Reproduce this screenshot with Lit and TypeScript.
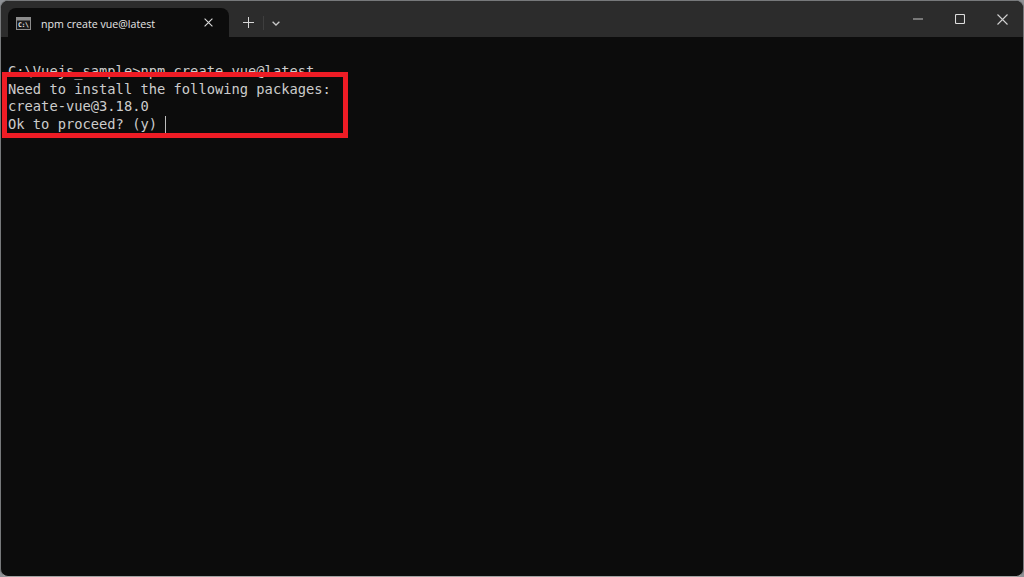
import { LitElement, html, css } from "lit";
import { customElement } from "lit/decorators.js";

@customElement("app-root")
export class AppRoot extends LitElement {
  static styles = css`
    :host { display: block; width: 1024px; height: 577px; background: #8f9296; overflow: hidden; }
    .window {
      position: relative; box-sizing: border-box; width: 1024px; height: 577px;
      border: 1px solid #77797b; border-bottom-color: #a3a3a3; border-radius: 8px; overflow: hidden;
      background: #0c0c0c; display: flex; flex-direction: column;
    }
    .titlebar { height: 36px; flex: none; background: #2c2c2c; display: flex; align-items: flex-end; padding-left: 7px; }
    .tab {
      width: 221px; height: 29px; background: #0c0c0c; border-radius: 8px 8px 0 0;
      display: flex; align-items: center; box-sizing: border-box; padding: 0 0 0 8px; flex: none;
    }
    .tab-icon { margin-top: 1px; }
    .tab-title { font: 500 10.65px "Open Sans", "Noto Sans", sans-serif; color: #e6e6e6; margin: 2px 0 0 10px; flex: 1; white-space: nowrap; }
    .tab-close { margin-right: 16px; }
    .new { display: flex; align-items: center; height: 29px; margin-left: 14px; flex: none; }
    .sep { width: 1px; height: 14px; background: #3e3e3e; margin: 0 8px 0 9px; }
    .chev { margin-top: 1px; }
    .spacer { flex: 1; }
    .caption { display: flex; align-self: stretch; align-items: center; margin-right: 0; }
    .cap { width: 42px; display: flex; justify-content: center; }
    svg { display: block; }
    .term {
      flex: 1; padding: 26px 0 0 7px; color: #cccccc;
      font: 400 13.75px/17.5px "DejaVu Sans Mono", monospace; white-space: pre;
    }
    .cursor { display: inline-block; width: 1px; height: 17px; background: #bdbdbd; vertical-align: top; }
    .mark {
      position: absolute; left: 1px; top: 71px; width: 346px; height: 66px; box-sizing: border-box;
      border: 5px solid #ee1c25;
    }
  `;

  render() {
    return html`
      <div class="window">
        <div class="titlebar">
          <div class="tab">
            <svg class="tab-icon" width="15" height="13" viewBox="0 0 15 13">
              <rect x=".5" y=".5" width="14" height="12" fill="#1a1a1a" stroke="#8c8c8c"/>
              <rect x="1" y="1" width="13" height="2.5" fill="#8c8c8c"/>
              <text x="2" y="10" font-size="6.5" font-weight="700" font-family="DejaVu Sans Mono" fill="#e8e8e8" textLength="11">C:\\</text>
            </svg>
            <span class="tab-title">npm create vue@latest</span>
            <svg class="tab-close" width="9" height="9" viewBox="0 0 9 9"><path d="M.6.6l7.8 7.8M8.4.6L.6 8.4" stroke="#dcdcdc" stroke-width="1.1"/></svg>
          </div>
          <div class="new">
            <svg width="11" height="11" viewBox="0 0 11 11"><path d="M5.5 0v11M0 5.5h11" stroke="#d8d8d8" stroke-width="1"/></svg>
            <div class="sep"></div>
            <svg class="chev" width="8" height="5" viewBox="0 0 8 5"><path d="M.6.8L4 4l3.4-3.2" fill="none" stroke="#c8c8c8" stroke-width="1.3"/></svg>
          </div>
          <div class="spacer"></div>
          <div class="caption">
            <div class="cap"><svg width="10" height="2" viewBox="0 0 10 2"><path d="M0 1h10" stroke="#c4c4c4" stroke-width="1"/></svg></div>
            <div class="cap"><svg width="10" height="10" viewBox="0 0 10 10"><rect x=".5" y=".5" width="9" height="9" rx="1" fill="none" stroke="#dcdcdc" stroke-width="1.1"/></svg></div>
            <div class="cap"><svg width="11" height="11" viewBox="0 0 11 11"><path d="M.5.5l10 10M10.5.5l-10 10" stroke="#d0d0d0" stroke-width="1.1"/></svg></div>
          </div>
        </div>
        <div class="term">C:\\Vuejs_sample&gt;npm create vue@latest
Need to install the following packages:
create-vue@3.18.0
Ok to proceed? (y) <span class="cursor"></span></div>
        <div class="mark"></div>
      </div>
    `;
  }
}
